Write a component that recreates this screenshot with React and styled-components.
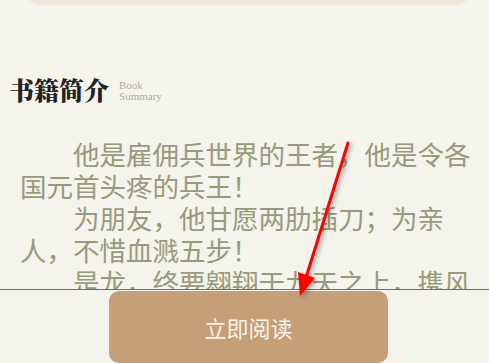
import React from "react";
import styled, { createGlobalStyle } from "styled-components";

const paragraphs = [
  "他是雇佣兵世界的王者，他是令各国元首头疼的兵王！",
  "为朋友，他甘愿两肋插刀；为亲人，不惜血溅五步！",
  "是龙，终要翱翔于九天之上，携风带雨，笑傲苍穹！",
];

const App = () => {
  return (
    <>
      <GlobalStyle />
      <Page>
        <ScrollArea>
          <InfoCard />
          <SectionHeader>
            <SectionTitle>书籍简介</SectionTitle>
            <SectionSub>
              Book
              <br />
              Summary
            </SectionSub>
          </SectionHeader>
          <Intro>
            {paragraphs.map((text) => (
              <IntroLine key={text}>{text}</IntroLine>
            ))}
          </Intro>
        </ScrollArea>
        <Footer>
          <ReadButton>立即阅读</ReadButton>
        </Footer>

        {/* annotation arrow drawn over the page */}
        <Arrow viewBox="0 0 489 363" width="489" height="363">
          <line
            x1="348"
            y1="143"
            x2="304"
            y2="284"
            stroke="#ff0000"
            strokeWidth="3"
            strokeLinecap="round"
          />
          <polygon points="300,296 298,272 315,278" fill="#ff0000" />
        </Arrow>
      </Page>
    </>
  );
};

export default App;

const GlobalStyle = createGlobalStyle`
  html, body {
    margin: 0;
    padding: 0;
    background: #f4f3ec;
  }
`;

const Page = styled.div`
  position: relative;
  display: flex;
  flex-direction: column;
  height: 100vh;
  overflow: hidden;
  background: #f4f3ec;
  font-family: "Noto Sans CJK SC", "Noto Sans", sans-serif;
`;

const ScrollArea = styled.div`
  flex: 1;
  overflow: hidden;
  padding: 0 16px 0 20px;
`;

const InfoCard = styled.div`
  height: 200px;
  margin: -197px 3px 0 6px;
  background: #f1e5d6;
  border-radius: 14px;
  box-shadow: 0 1px 3px rgba(200, 170, 140, 0.25);
`;

const SectionHeader = styled.div`
  display: flex;
  align-items: center;
  gap: 10px;
  margin: 70px 0 0 -11px;
`;

const SectionTitle = styled.h2`
  margin: 0;
  font-family: "Noto Serif CJK SC", "Noto Sans CJK SC", serif;
  font-size: 25px;
  font-weight: 900;
  line-height: 32px;
  color: #222222;
`;

const SectionSub = styled.span`
  margin-top: 4px;
  font-family: "Liberation Serif", serif;
  font-size: 11px;
  line-height: 11px;
  color: #aeaba5;
`;

const Intro = styled.div`
  margin-top: 33px;
  color: #989a7c;
  font-size: 26.5px;
  line-height: 32px;
`;

const IntroLine = styled.p`
  margin: 0;
  text-indent: 2em;
`;

const Footer = styled.div`
  display: flex;
  justify-content: center;
  height: 74px;
  padding: 1px 0 0 8px;
  box-sizing: border-box;
  border-top: 1px solid #6e6e62;
  background: #f4f3ec;
`;

const ReadButton = styled.button`
  width: 279px;
  height: 72px;
  border: none;
  border-radius: 10px;
  background: #c49f78;
  color: #f8f1e8;
  font-family: "Noto Sans CJK SC", sans-serif;
  font-size: 22px;
  cursor: pointer;
`;

const Arrow = styled.svg`
  position: absolute;
  left: 0;
  top: 0;
  pointer-events: none;
  filter: drop-shadow(2px 2px 2px rgba(0, 0, 0, 0.35));
`;
